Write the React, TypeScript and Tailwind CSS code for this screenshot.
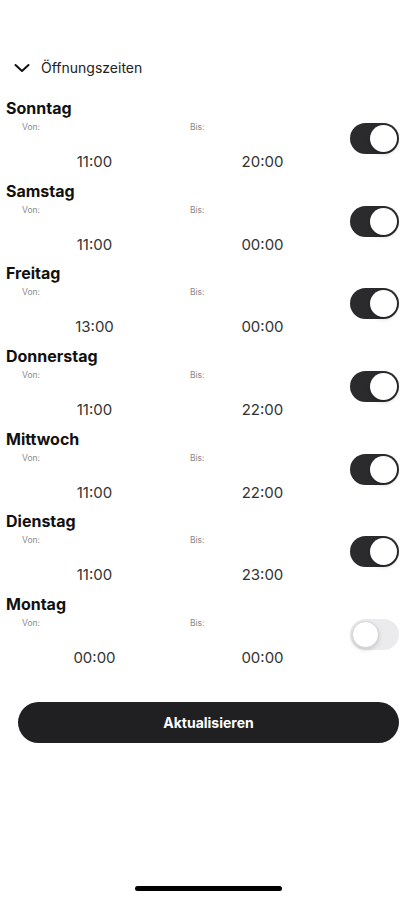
import React from "react";

type Day = { name: string; from: string; to: string; open: boolean };

const days: Day[] = [
    { name: "Sonntag", from: "11:00", to: "20:00", open: true },
    { name: "Samstag", from: "11:00", to: "00:00", open: true },
    { name: "Freitag", from: "13:00", to: "00:00", open: true },
    { name: "Donnerstag", from: "11:00", to: "22:00", open: true },
    { name: "Mittwoch", from: "11:00", to: "22:00", open: true },
    { name: "Dienstag", from: "11:00", to: "23:00", open: true },
    { name: "Montag", from: "00:00", to: "00:00", open: false },
];

const Toggle = ({ on }: { on: boolean }) => (
    <div
        className={
            on
                ? "w-[49px] h-[31px] rounded-full bg-[#2b2b2d] p-[2px] flex justify-end"
                : "w-[49px] h-[31px] rounded-full bg-[#ebebed] p-[2px] flex justify-start"
        }
    >
        <div
            className={
                on
                    ? "w-[27px] h-[27px] rounded-full bg-white shadow-[0_2px_4px_rgba(0,0,0,0.2)]"
                    : "w-[27px] h-[27px] rounded-full bg-white border border-[#d4d4d6] shadow-[0_2px_4px_rgba(0,0,0,0.15)]"
            }
        />
    </div>
);

const DayRow = ({ day }: { day: Day }) => (
    <div className="h-[82.67px] flex pl-[6px] pr-[18px]">
        <div className="flex-1 flex flex-col">
            <div className="h-5 leading-5 text-[16px] font-bold text-[#111]">{day.name}</div>
            {/* labels + times */}
            <div className="grid grid-cols-[145px_145px] gap-x-[23px] pl-[16px] mt-[4px]">
                <div className="h-[10px] leading-[10px] text-[8.5px] text-[#8a8a8a]">Von:</div>
                <div className="h-[10px] leading-[10px] text-[8.5px] text-[#8a8a8a]">Bis:</div>
                <div className="mt-[20px] h-5 leading-5 text-[15px] text-[#333] text-center">{day.from}</div>
                <div className="mt-[20px] h-5 leading-5 text-[15px] text-[#333] text-center">{day.to}</div>
            </div>
        </div>
        <div className="pt-[25px]">
            <Toggle on={day.open} />
        </div>
    </div>
);

export default function App() {
    return (
        <div className="w-[417px] min-h-[900px] bg-white flex flex-col font-['Inter',sans-serif]">
            {/* section header */}
            <div className="flex items-center gap-[11px] pl-[14px] mt-[58px] h-5">
                <svg width="16" height="10" viewBox="0 0 16 10" fill="none" stroke="#111" strokeWidth="2" strokeLinecap="round" strokeLinejoin="round">
                    <path d="M1.5 2l6.5 6 6.5-6" />
                </svg>
                <span className="text-[14px] leading-5 text-[#222]">Öffnungszeiten</span>
            </div>

            <div className="mt-5 flex flex-col">
                {days.map((d) => (
                    <DayRow key={d.name} day={d} />
                ))}
            </div>

            <div className="px-[18px] mt-[25px]">
                <button className="w-full h-[41px] rounded-full bg-[#202022] text-white text-[14px] font-bold">
                    Aktualisieren
                </button>
            </div>

            <div className="flex-1" />
            <div className="flex justify-center pb-[9px]">
                <div className="w-[147px] h-[5px] rounded-full bg-black" />
            </div>
        </div>
    );
}
